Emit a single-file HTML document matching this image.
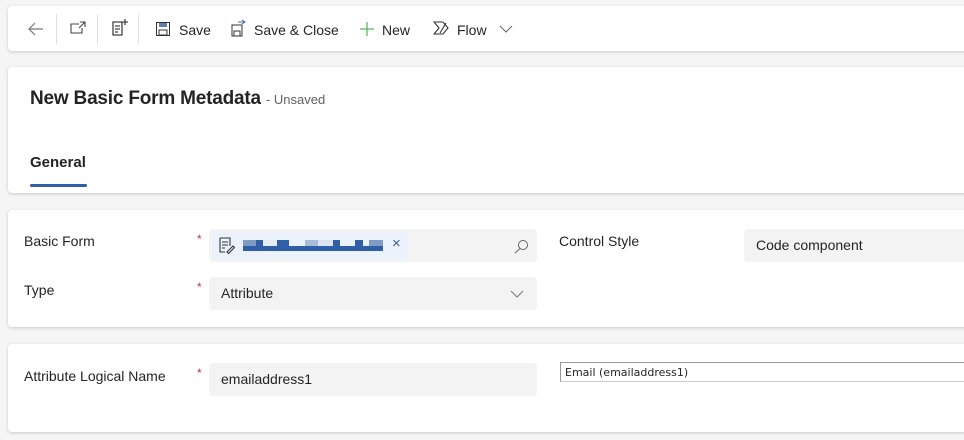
<!DOCTYPE html>
<html><head><style>
*{box-sizing:border-box;margin:0;padding:0}
body{width:964px;height:440px;overflow:hidden;background:#f5f5f5;font-family:"Liberation Sans",sans-serif;color:#242424;position:relative}
.card{position:absolute;left:8px;width:970px;background:#fff;border-radius:4px;box-shadow:0 1px 3px rgba(0,0,0,.18)}
.t{position:absolute;font-size:14px;white-space:nowrap}
.sep{position:absolute;top:8px;width:1px;height:30px;background:#e0e0e0}
.lbl{position:absolute;font-size:14px;color:#242424}
.star{position:absolute;color:#c4314b;font-size:12px}
.inp{position:absolute;background:#f3f3f3;border-radius:4px;height:33px;font-size:14px;padding:8px 12px}
svg{position:absolute}
</style></head><body>
<div class="card" style="top:6px;height:45px">
<svg style="left:20px;top:16px" width="16" height="14" viewBox="0 0 16 14"><path d="M15 7H1M7 1L1 7l6 6" stroke="#777" fill="none" stroke-width="1.2"/></svg>
<div class="sep" style="left:48px"></div>
<svg style="left:62px;top:15px" width="16" height="14" viewBox="0 0 16 14"><path d="M9 3H1v9h11V7M10 1h5v5M15 1l-6 6" stroke="#444" fill="none" stroke-width="1.1"/></svg>
<div class="sep" style="left:89px"></div>
<svg style="left:103px;top:12px" width="18" height="20" viewBox="0 0 18 20"><path d="M2 4h9v13H2zM4 8h5M4 11h5M4 14h3M14 1v6M11 4h6" stroke="#444" fill="none" stroke-width="1.3"/></svg>
<div class="sep" style="left:130px"></div>
<svg style="left:148px;top:16px" width="14" height="14" viewBox="0 0 14 14"><rect x="0.5" y="0.5" width="13" height="13" fill="#fff" stroke="#333"/><rect x="3" y="1" width="8" height="4" fill="#5b7fb6"/><rect x="3" y="8" width="8" height="5" fill="#fff" stroke="#333"/></svg>
<div class="t" style="left:171px;top:16px">Save</div>
<svg style="left:223px;top:13px" width="16" height="18" viewBox="0 0 16 18"><rect x="1" y="6" width="10" height="11" fill="#fff" stroke="#333"/><rect x="3" y="12" width="6" height="5" fill="none" stroke="#333"/><path d="M7 3h7M11 1l3 2-3 2" stroke="#3a6db8" fill="none"/></svg>
<div class="t" style="left:246px;top:16px">Save &amp; Close</div>
<svg style="left:351px;top:15px" width="16" height="16" viewBox="0 0 16 16"><path d="M8 1v14M1 8h14" stroke="#5cb85c" stroke-width="1.3"/></svg>
<div class="t" style="left:374px;top:16px">New</div>
<svg style="left:425px;top:15px" width="18" height="14" viewBox="0 0 18 14"><path d="M1 1h9l5 6-5 6H1l5-6zM7 12l6-10" stroke="#333" fill="none" stroke-width="1.1"/></svg>
<div class="t" style="left:449px;top:16px">Flow</div>
<svg style="left:491px;top:19px" width="14" height="8" viewBox="0 0 14 8"><path d="M1 1l6 6 6-6" stroke="#666" fill="none"/></svg>
</div>
<div class="card" style="top:67px;height:126px">
<div class="t" style="left:22px;top:21px;font-size:19px;font-weight:bold;letter-spacing:-0.2px">New Basic Form Metadata <span style="font-size:13px;font-weight:normal;color:#616161;letter-spacing:0">- Unsaved</span></div>
<div class="t" style="left:22px;top:87px;font-size:15px;font-weight:bold">General</div>
<div style="position:absolute;left:22px;top:117px;width:57px;height:3px;background:#2f5fa6;border-radius:2px"></div>
</div>
<div class="card" style="top:210px;height:117px">
<div class="lbl" style="left:16px;top:23px">Basic Form</div>
<div class="star" style="left:189px;top:22px">*</div>
<div class="inp" style="left:201px;top:19px;width:328px;padding:3px"><div style="height:27px;width:196px;background:#ebf2fb;border-radius:4px;position:relative">
<svg style="left:7px;top:5px" width="16" height="17" viewBox="0 0 16 17"><path d="M1 1h10v8M1 1v14h5M3 5h6M3 8h6M3 11h3M8 15l6-6 1.5 1.5-6 6z" stroke="#333" fill="none" stroke-width="1.1"/></svg>
<div style="position:absolute;left:31px;top:8px;width:140px;height:6px;background:linear-gradient(90deg,#7e9bc8 0 13px,#2f5fa6 13px 20px,#e5ecf5 20px 34px,#2f5fa6 34px 46px,#ebf2fb 46px 62px,#a9bcdc 62px 75px,#dbe4f1 75px 90px,#2f5fa6 90px 97px,#ebf2fb 97px 112px,#2f5fa6 112px 120px,#ebf2fb 120px 126px,#7e9bc8 126px 140px)"></div>
<div style="position:absolute;left:31px;top:14px;width:140px;height:5px;background:#2f5fa6"></div>
<div style="position:absolute;left:180px;top:3px;color:#2f5fa6;font-size:15px">×</div>
</div>
<svg style="left:305px;top:10px" width="15" height="15" viewBox="0 0 15 15"><circle cx="9" cy="6" r="4.5" stroke="#666" fill="none"/><path d="M6 9.5L1 14" stroke="#666"/></svg></div>
<div class="lbl" style="left:551px;top:23px">Control Style</div>
<div class="inp" style="left:736px;top:19px;width:240px">Code component</div>
<div class="lbl" style="left:16px;top:72px">Type</div>
<div class="star" style="left:189px;top:70px">*</div>
<div class="inp" style="left:201px;top:67px;width:328px">Attribute
<svg style="left:301px;top:13px" width="14" height="8" viewBox="0 0 14 8"><path d="M1 1l6 6 6-6" stroke="#777" fill="none"/></svg></div>
</div>
<div class="card" style="top:344px;height:88px">
<div class="lbl" style="left:16px;top:24px">Attribute Logical Name</div>
<div class="star" style="left:189px;top:22px">*</div>
<div class="inp" style="left:201px;top:19px;width:328px">emailaddress1</div>
<div style="position:absolute;left:552px;top:18px;width:420px;height:20px;border:1px solid #999;border-bottom-color:#ccc;border-right:none;font-size:11px;padding:3px 4px;font-family:'DejaVu Sans',sans-serif">Email (emailaddress1)</div>
</div>
</body></html>
